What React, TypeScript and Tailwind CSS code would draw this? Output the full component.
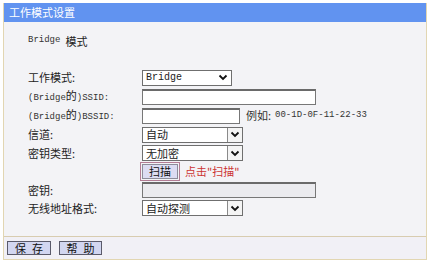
import React from 'react';

const cjk = "font-['Noto_Sans_CJK_SC',sans-serif]";
const mono = "font-['Liberation_Mono','Noto_Sans_CJK_SC',monospace] text-[9px]";

function Chevron() {
  return (
    <svg width="10" height="7" viewBox="0 0 10 7">
      <path d="M1.5 1.5 L5 5 L8.5 1.5" fill="none" stroke="#111" strokeWidth="1.8" />
    </svg>
  );
}

function Select({ value, width, latin, boxed = true }: { value: string; width: string; latin?: boolean; boxed?: boolean }) {
  return (
    <div className={`flex h-[16px] items-stretch border border-[#6f6f6f] bg-white ${width}`}>
      <div
        className={`flex flex-1 items-center pl-[3px] text-[#222] ${
          latin ? "font-['Liberation_Mono',monospace] text-[10px]" : 'text-[11px]'
        }`}
      >
        {value}
      </div>
      {boxed ? (
        <div className="flex w-[15px] items-center justify-center border-l border-[#8a8a8a] bg-[#f4f4f4]">
          <Chevron />
        </div>
      ) : (
        <div className="flex w-[16px] items-center justify-center">
          <Chevron />
        </div>
      )}
    </div>
  );
}

function Input({ width, disabled }: { width: string; disabled?: boolean }) {
  return (
    <div
      className={`h-[16px] border border-[#777] border-t-[2px] border-t-[#6a6a6a] ${width} ${
        disabled ? 'bg-[#ebebef]' : 'bg-white'
      }`}
    />
  );
}

function Row({ label, h, children }: { label: React.ReactNode; h: string; children?: React.ReactNode }) {
  return (
    <div className={`flex items-center ${h}`}>
      <div className="w-[114px] text-[11px] text-[#222]">{label}</div>
      <div className="flex items-center">{children}</div>
    </div>
  );
}

export default function App() {
  return (
    <div className={`h-[262px] w-[430px] bg-white pl-[3px] pt-[3px] ${cjk}`}>
      <div className="flex h-[257px] w-[424px] flex-col border border-t-0 border-[#e2d6b2] bg-[#f3f3f6]">
        <div className="flex h-[19px] items-center bg-[#6193f0] pl-[5px] text-[11px] text-white">工作模式设置</div>

        <div className="flex-1 pl-[24px]">
          <div className="flex h-[34px] items-center pt-[4px] text-[11px] text-[#222]">
            <span className={`text-[#333] ${mono}`}>Bridge</span>
            <span className="ml-[5px]">模式</span>
          </div>
          <div className="h-[12px]" />
          <Row label="工作模式:" h="h-[19px]">
            <Select value="Bridge" width="w-[90px]" latin boxed={false} />
          </Row>
          <Row label={<><span className={`text-[#333] ${mono}`}>(Bridge</span>的<span className={`text-[#333] ${mono}`}>)SSID:</span></>} h="h-[19px]">
            <Input width="w-[174px]" />
          </Row>
          <Row label={<><span className={`text-[#333] ${mono}`}>(Bridge</span>的<span className={`text-[#333] ${mono}`}>)BSSID:</span></>} h="h-[19px]">
            <Input width="w-[98px]" />
            <span className="ml-[6px] text-[11px] text-[#333]">例如:</span>
            <span className={`ml-[4px] text-[#333] ${mono}`}>00-1D-0F-11-22-33</span>
          </Row>
          <Row label="信道:" h="h-[19px]">
            <Select value="自动" width="w-[101px]" />
          </Row>
          <Row label="密钥类型:" h="h-[18px]">
            <Select value="无加密" width="w-[101px]" />
          </Row>
          <Row label="" h="h-[19px]">
            <div className="-ml-[2px] border border-[#b27c94] p-[1px]">
              <div className="flex h-[15px] w-[36px] items-center justify-center border border-[#8d8d9a] bg-[#dcdcf2] text-[11px] text-[#111]">
                扫描
              </div>
            </div>
            <span className="ml-[5px] text-[11px] text-[#cc3333]">点击"扫描"</span>
          </Row>
          <Row label="密钥:" h="h-[18px]">
            <Input width="w-[174px]" disabled />
          </Row>
          <Row label="无线地址格式:" h="h-[18px]">
            <Select value="自动探测" width="w-[101px]" />
          </Row>
        </div>

        <div className="flex h-[23px] items-center gap-[8px] border-t border-[#d8ccb0] bg-[#f1f0f6] pl-[3px]">
          <div className="flex h-[14px] w-[44px] items-center justify-center gap-[6px] border border-[#5a5a6a] bg-[#d2d6f0] text-[11px] text-[#111]">
            <span>保</span>
            <span>存</span>
          </div>
          <div className="flex h-[14px] w-[43px] items-center justify-center gap-[6px] border border-[#5a5a6a] bg-[#d2d6f0] text-[11px] text-[#111]">
            <span>帮</span>
            <span>助</span>
          </div>
        </div>
      </div>
    </div>
  );
}
